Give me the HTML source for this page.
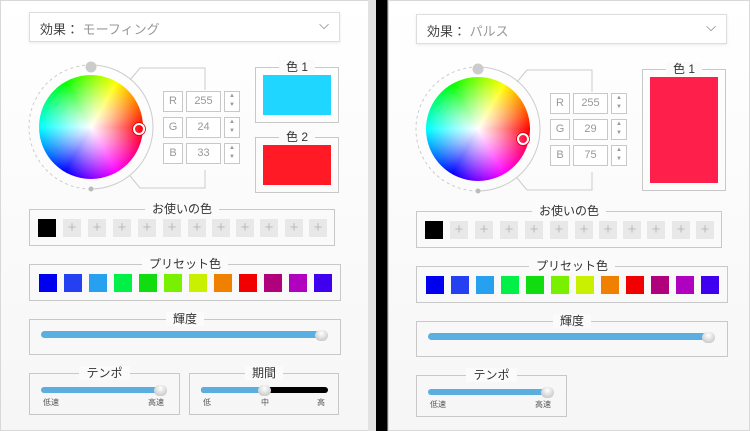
<!DOCTYPE html><html><head><meta charset="utf-8"><style>
*{box-sizing:border-box;margin:0;padding:0}
body{width:750px;height:431px;overflow:hidden;background:#fff;font-family:"Liberation Sans","Noto Sans CJK JP",sans-serif;position:relative}
.p{position:absolute;top:0;width:369px;height:431px;background:linear-gradient(#fff,#f6f6f6);border:1px solid #d8d8d8}
.a{position:absolute}
.dd{border:1px solid #ddd;background:#fff;box-shadow:0 1px 3px rgba(0,0,0,.08);font-size:13px;color:#444;padding:6px 10px;height:30px}
.dd span{color:#999}
.box{position:absolute;border:1px solid #c8c8c8}
.lbl{position:absolute;top:-9px;left:0;right:0;text-align:center;font-size:12px;color:#333;line-height:16px}
.lbl b{font-weight:normal;background:#fbfbfb;padding:0 7px}
.sw{position:absolute;width:18px;height:18px}
.pl{background:#e8e8e8;color:#bbb;font-size:15px;line-height:17px;text-align:center}
.rb{position:absolute;border:1px solid #c8c8c8;font-size:11px;color:#999;text-align:center;line-height:19px;background:#fff}
.sp{position:absolute;border:1px solid #c8c8c8;width:16px;height:21px;font-size:6px;color:#999;text-align:center;line-height:9px;background:#fff}
.tr{position:absolute;height:7px;border-radius:4px;background:#5aaee0}
.kn{position:absolute;width:13px;height:11px;border-radius:6px;background:radial-gradient(circle at 50% 30%,#fff,#bbb)}
.sm{position:absolute;font-size:8px;color:#555}
.wh{position:absolute;left:39px;top:75px;width:104px;height:104px;border-radius:50%;background:conic-gradient(from 90deg,#f00,#f0f,#00f,#0ff,#0f0,#ff0,#f00)}
.wh div{width:104px;height:104px;border-radius:50%;background:radial-gradient(#fff 0,rgba(255,255,255,.6) 30%,rgba(255,255,255,0) 70%)}
</style></head><body>
<div class="p" style="left:0"></div>
<div class="a" style="left:368px;top:0;width:8px;height:431px;background:#e2e2e2"></div>
<div class="a" style="left:376px;top:0;width:11px;height:431px;background:#000"></div>
<div class="a" style="left:387px;top:0;width:1px;height:431px;background:#6a5fa0"></div>
<div class="p" style="left:388px;width:362px"></div>

<div class="a dd" style="left:29px;top:12px;width:311px">効果： <span>モーフィング</span><span style="position:absolute;right:10px;top:4px;color:#666">⌵</span></div>
<div class="a dd" style="left:416px;top:14px;width:311px">効果： <span>パルス</span><span style="position:absolute;right:10px;top:4px;color:#666">⌵</span></div>

<div class="wh"><div></div></div>
<div class="wh" style="left:426px;top:77px"><div></div></div>

<svg class="a" style="left:0;top:0" width="750" height="431">
<g>
<path d="M91 65 A62 62 0 0 1 91 189" fill="none" stroke="#ccc"/>
<path d="M91 65 A62 62 0 0 0 91 189" fill="none" stroke="#ccc" stroke-dasharray="3 3"/>
<path d="M130 80 L140 68 L205 68 L205 90 M205 170 L205 188 L140 188 L130 176" fill="none" stroke="#ccc"/>
<circle cx="91" cy="67" r="5.5" fill="#ccc"/><circle cx="91" cy="189" r="2.5" fill="#bbb"/>
</g>
<g transform="translate(387 2)">
<path d="M91 65 A62 62 0 0 1 91 189" fill="none" stroke="#ccc"/>
<path d="M91 65 A62 62 0 0 0 91 189" fill="none" stroke="#ccc" stroke-dasharray="3 3"/>
<path d="M130 80 L140 68 L205 68 L205 90 M205 170 L205 188 L140 188 L130 176" fill="none" stroke="#ccc"/>
<circle cx="91" cy="67" r="5.5" fill="#ccc"/><circle cx="91" cy="189" r="2.5" fill="#bbb"/>
</g>
<circle cx="139" cy="129" r="5" fill="none" stroke="#fff" stroke-width="2"/><circle cx="139" cy="129" r="6.5" fill="none" stroke="#d00" stroke-width=".8"/>
<circle cx="523" cy="139" r="5" fill="none" stroke="#fff" stroke-width="2"/><circle cx="523" cy="139" r="6.5" fill="none" stroke="#d00" stroke-width=".8"/>
</svg>

<div class="a" style="left:0;top:0">
<div class="rb" style="left:163px;top:91px;width:20px;height:21px">R</div><div class="rb" style="left:186px;top:91px;width:35px;height:21px">255</div><div class="sp" style="left:224px;top:91px">▲<br>▼</div>
<div class="rb" style="left:163px;top:117px;width:20px;height:21px">G</div><div class="rb" style="left:186px;top:117px;width:35px;height:21px">24</div><div class="sp" style="left:224px;top:117px">▲<br>▼</div>
<div class="rb" style="left:163px;top:143px;width:20px;height:21px">B</div><div class="rb" style="left:186px;top:143px;width:35px;height:21px">33</div><div class="sp" style="left:224px;top:143px">▲<br>▼</div>
<div class="box" style="left:255px;top:67px;width:84px;height:56px"><div class="lbl"><b>色 1</b></div><div class="a" style="left:7px;top:7px;width:68px;height:40px;background:#1ed6ff"></div></div>
<div class="box" style="left:255px;top:137px;width:84px;height:56px"><div class="lbl"><b>色 2</b></div><div class="a" style="left:7px;top:7px;width:68px;height:40px;background:#ff1a25"></div></div>
</div>
<div class="a" style="left:387px;top:2px">
<div class="rb" style="left:163px;top:91px;width:20px;height:21px">R</div><div class="rb" style="left:186px;top:91px;width:35px;height:21px">255</div><div class="sp" style="left:224px;top:91px">▲<br>▼</div>
<div class="rb" style="left:163px;top:117px;width:20px;height:21px">G</div><div class="rb" style="left:186px;top:117px;width:35px;height:21px">29</div><div class="sp" style="left:224px;top:117px">▲<br>▼</div>
<div class="rb" style="left:163px;top:143px;width:20px;height:21px">B</div><div class="rb" style="left:186px;top:143px;width:35px;height:21px">75</div><div class="sp" style="left:224px;top:143px">▲<br>▼</div>
<div class="box" style="left:255px;top:67px;width:84px;height:122px"><div class="lbl"><b>色 1</b></div><div class="a" style="left:7px;top:7px;width:68px;height:106px;background:#ff1f4b"></div></div>
</div>

<div class="a" style="left:0;top:0">
<div class="box" style="left:29px;top:209px;width:306px;height:37px"><div class="lbl"><b>お使いの色</b></div>
<div class="sw" style="left:8px;top:9px;background:#000"></div>
<div class="sw pl" style="left:33px;top:9px">+</div><div class="sw pl" style="left:58px;top:9px">+</div><div class="sw pl" style="left:83px;top:9px">+</div><div class="sw pl" style="left:108px;top:9px">+</div><div class="sw pl" style="left:133px;top:9px">+</div><div class="sw pl" style="left:158px;top:9px">+</div><div class="sw pl" style="left:182px;top:9px">+</div><div class="sw pl" style="left:206px;top:9px">+</div><div class="sw pl" style="left:230px;top:9px">+</div><div class="sw pl" style="left:255px;top:9px">+</div><div class="sw pl" style="left:279px;top:9px">+</div>
</div>
<div class="box" style="left:29px;top:264px;width:312px;height:37px"><div class="lbl"><b>プリセット色</b></div>
<div class="sw" style="left:9px;top:9px;background:#0000f0"></div><div class="sw" style="left:34px;top:9px;background:#2440f0"></div><div class="sw" style="left:59px;top:9px;background:#28a0f0"></div><div class="sw" style="left:84px;top:9px;background:#00f048"></div><div class="sw" style="left:109px;top:9px;background:#10dc10"></div><div class="sw" style="left:134px;top:9px;background:#78f000"></div><div class="sw" style="left:159px;top:9px;background:#c8f000"></div><div class="sw" style="left:184px;top:9px;background:#f08000"></div><div class="sw" style="left:209px;top:9px;background:#f00000"></div><div class="sw" style="left:234px;top:9px;background:#b0007c"></div><div class="sw" style="left:259px;top:9px;background:#b000c0"></div><div class="sw" style="left:284px;top:9px;background:#4000f0"></div>
</div>
<div class="box" style="left:29px;top:319px;width:312px;height:36px"><div class="lbl"><b>輝度</b></div>
<div class="tr" style="left:11px;top:11px;width:282px"></div><div class="kn" style="left:285px;top:10px"></div></div>
<div class="box" style="left:29px;top:373px;width:151px;height:42px"><div class="lbl"><b>テンポ</b></div>
<div class="tr" style="left:11px;top:13px;width:120px;height:6px"></div><div class="kn" style="left:124px;top:11px"></div>
<div class="sm" style="left:13px;top:23px">低速</div><div class="sm" style="left:118px;top:23px">高速</div></div>
<div class="box" style="left:189px;top:373px;width:150px;height:42px"><div class="lbl"><b>期間</b></div>
<div class="a" style="left:11px;top:13px;width:127px;height:6px;border-radius:3px;background:#000"></div><div class="tr" style="left:11px;top:13px;width:64px;height:6px"></div><div class="kn" style="left:68px;top:11px"></div>
<div class="sm" style="left:13px;top:23px">低</div><div class="sm" style="left:71px;top:23px">中</div><div class="sm" style="left:127px;top:23px">高</div></div>
</div>

<div class="a" style="left:387px;top:2px">
<div class="box" style="left:29px;top:209px;width:306px;height:37px"><div class="lbl"><b>お使いの色</b></div>
<div class="sw" style="left:8px;top:9px;background:#000"></div>
<div class="sw pl" style="left:33px;top:9px">+</div><div class="sw pl" style="left:58px;top:9px">+</div><div class="sw pl" style="left:83px;top:9px">+</div><div class="sw pl" style="left:108px;top:9px">+</div><div class="sw pl" style="left:133px;top:9px">+</div><div class="sw pl" style="left:158px;top:9px">+</div><div class="sw pl" style="left:182px;top:9px">+</div><div class="sw pl" style="left:206px;top:9px">+</div><div class="sw pl" style="left:230px;top:9px">+</div><div class="sw pl" style="left:255px;top:9px">+</div><div class="sw pl" style="left:279px;top:9px">+</div>
</div>
<div class="box" style="left:29px;top:264px;width:312px;height:37px"><div class="lbl"><b>プリセット色</b></div>
<div class="sw" style="left:9px;top:9px;background:#0000f0"></div><div class="sw" style="left:34px;top:9px;background:#2440f0"></div><div class="sw" style="left:59px;top:9px;background:#28a0f0"></div><div class="sw" style="left:84px;top:9px;background:#00f048"></div><div class="sw" style="left:109px;top:9px;background:#10dc10"></div><div class="sw" style="left:134px;top:9px;background:#78f000"></div><div class="sw" style="left:159px;top:9px;background:#c8f000"></div><div class="sw" style="left:184px;top:9px;background:#f08000"></div><div class="sw" style="left:209px;top:9px;background:#f00000"></div><div class="sw" style="left:234px;top:9px;background:#b0007c"></div><div class="sw" style="left:259px;top:9px;background:#b000c0"></div><div class="sw" style="left:284px;top:9px;background:#4000f0"></div>
</div>
<div class="box" style="left:29px;top:319px;width:312px;height:36px"><div class="lbl"><b>輝度</b></div>
<div class="tr" style="left:11px;top:11px;width:282px"></div><div class="kn" style="left:285px;top:10px"></div></div>
<div class="box" style="left:29px;top:373px;width:151px;height:42px"><div class="lbl"><b>テンポ</b></div>
<div class="tr" style="left:11px;top:13px;width:120px;height:6px"></div><div class="kn" style="left:124px;top:11px"></div>
<div class="sm" style="left:13px;top:23px">低速</div><div class="sm" style="left:118px;top:23px">高速</div></div>
</div>
</body></html>
